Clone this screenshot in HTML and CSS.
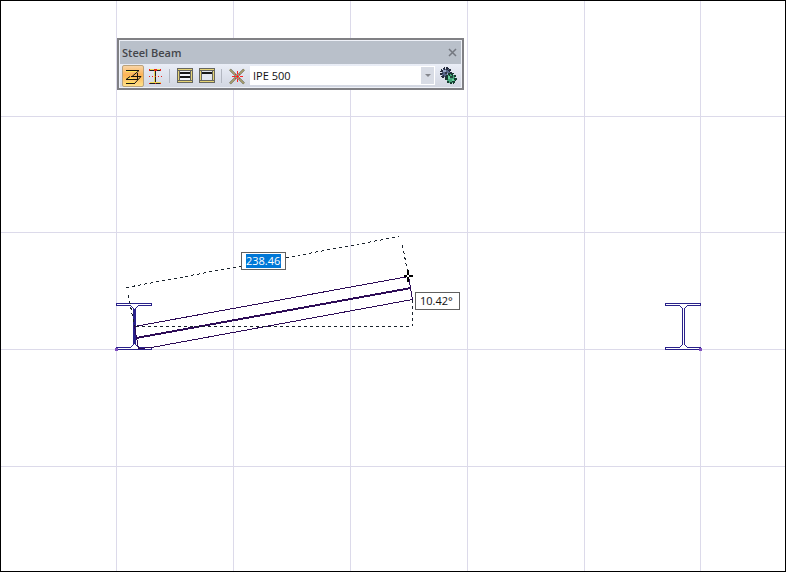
FILE: index.html
```
<!DOCTYPE html>
<html lang="en">
<head>
<meta charset="utf-8">
<title>Steel Beam</title>
<link rel="stylesheet" href="styles.css">
</head>
<body>
<main class="canvas">
  <svg class="drawing" aria-hidden="true" shape-rendering="crispEdges">
    <defs>
      <g id="section" fill="none" stroke="#29218a">
        <path d="M14.500 2.500H.5V.5H35.500V2.500H22.500L19.500 5.500V41.500L22.500 44.500H35.500V46.500H.5V44.500H14.500L17.500 41.500V5.500L14.500 2.500"/>
      </g>
    </defs>
    <g class="grid">
      <line x1="116.500" x2="116.500" y1="0" y2="100%"/>
      <line x1="233.500" x2="233.500" y1="0" y2="100%"/>
      <line x1="350.500" x2="350.500" y1="0" y2="100%"/>
      <line x1="467.500" x2="467.500" y1="0" y2="100%"/>
      <line x1="584.500" x2="584.500" y1="0" y2="100%"/>
      <line x1="700.500" x2="700.500" y1="0" y2="100%"/>
      <line x1="0" x2="100%" y1="116.500" y2="116.500"/>
      <line x1="0" x2="100%" y1="232.500" y2="232.500"/>
      <line x1="0" x2="100%" y1="349.500" y2="349.500"/>
      <line x1="0" x2="100%" y1="466.500" y2="466.500"/>
    </g>
    <use href="#section" x="116" y="303"/>
    <use href="#section" x="665" y="303"/>
    <path class="web" d="M134.500 309V344"/>
    <path class="node" d="M115 348h3v3h-3zM699 348h3v3h-3z"/>
    <path class="beam" d="M134.500 326.500L408.500 276.500L412.500 299.500L151.500 347.500L138.500 348.500L134.500 326.500"/>
    <path class="beam axis" d="M136 338L411 288"/>
    <path class="guide" d="M126.500 287.500L399.500 236.500M128.500 295.500L134.500 326.500M402.500 245.500L408.500 276.500M136 326.500H412M412.500 300V326"/>
    <path class="cursor" d="M407 270h2v5h4v2h-4v5h-2v-5h-3v-2h3z"/>
    <path fill="#fff" d="M407 275h2v2h-2z"/>
  </svg>

  <section class="panel" aria-label="Steel Beam">
    <header class="title">
      <h1>Steel Beam</h1>
      <button class="close" aria-label="Close">
        <svg width="9" height="9"><path d="M1 1L8 8M8 1L1 8" stroke="#747880" stroke-width="1.500"/></svg>
      </button>
    </header>
    <div class="tools">
      <button class="tool active" aria-label="Beam by two points">
        <svg width="18" height="18" fill="none" stroke="#17150e">
          <path d="M2 4.500H13M3 11.500H9M2 15.500H10" stroke="#ffe354"/>
          <path shape-rendering="crispEdges" d="M2 3.500H15M7 9.500H17M2 12.500H13M2 16.500H11M13.500 6V13"/>
          <path d="M15 3.500L8 9.500M17 9.500L10.500 16.500M6 9.500L2 12.500"/>
        </svg>
      </button>
      <button class="tool" aria-label="Section insertion point">
        <svg width="18" height="18" shape-rendering="crispEdges">
          <path fill="#ecd75a" d="M4 2h11v1H4zM8 3h1v12H8zM4 15h11v1H4z"/>
          <path fill="#222" d="M4 3h11v1H4zM9 4h1v11H9zM4 16h11v1H4z"/>
          <path fill="#e62219" d="M3 2h1v2H3zM8 2h3v2H8zM14 2h1v2h-1zM3 9h1v1H3zM6 9h1v1H6zM9 9h1v1H9zM12 9h1v1h-1zM15 9h1v1h-1zM3 16h1v1H3zM9 16h1v1H9zM14 16h1v1h-1z"/>
        </svg>
      </button>
      <span class="separator"></span>
      <button class="tool" aria-label="Top and bottom elevation">
        <svg width="18" height="18" shape-rendering="crispEdges">
          <path fill="#66665f" d="M1 1h16v15H1z"/><path fill="#e6d476" d="M2 2h14v1H2zM2 14h14v1H2zM2 4h1v9H2zM15 4h1v9h-1z"/>
          <path fill="#f2f4f8" d="M4 4h10v9H4z"/><path fill="#171717" d="M4 5h10v2H4zM4 9h10v2H4z"/>
        </svg>
      </button>
      <button class="tool" aria-label="Top elevation">
        <svg width="18" height="18" shape-rendering="crispEdges">
          <path fill="#66665f" d="M1 1h16v15H1z"/><path fill="#e6d476" d="M2 2h14v1H2zM2 14h14v1H2zM2 4h1v9H2zM15 4h1v9h-1z"/>
          <path fill="#e2e6ef" d="M4 4h10v9H4z"/><path fill="#171717" d="M4 5h10v2H4z"/>
        </svg>
      </button>
      <span class="separator"></span>
      <button class="tool" aria-label="Delete">
        <svg width="18" height="18">
          <path d="M2 2.500L16 16.500M16 2.500L2 16.500" stroke="#62624f" stroke-width="2.400"/>
          <path d="M2 2.500L16 16.500M16 2.500L2 16.500" stroke="#e7d584" stroke-width="1"/>
          <path shape-rendering="crispEdges" fill="#f22" d="M9 4h1v3H9zM9 12h1v3H9zM4 9h3v1H4zM12 9h3v1h-3zM9 8h1v3H9zM8 9h3v1H8zM7 7h1v1H7zM11 7h1v1h-1zM7 11h1v1H7zM11 11h1v1h-1z"/>
        </svg>
      </button>
      <span class="combo">
        <select aria-label="Section"><option>IPE 500</option></select>
        <span class="arrow"><svg width="6" height="3"><path d="M0 0H6L3 3z" fill="#85878d"/></svg></span>
      </span>
      <button class="tool" aria-label="Settings">
        <svg width="18" height="18" shape-rendering="crispEdges">
          <circle cx="7" cy="6" r="4.500" fill="#566487" stroke="#252b3d" stroke-width="2.500" stroke-dasharray="2 1"/>
          <path d="M4 3h3v2H4zM8 6h2v2H8z" fill="#9aa8c8"/><path d="M6 5h2v2H6z" fill="#303648"/>
          <circle cx="12" cy="11.500" r="4.500" fill="#46a77b" stroke="#173c30" stroke-width="2.500" stroke-dasharray="2 1"/>
          <path d="M9 9h2v3H9zM13 12h2v2h-2z" fill="#6cd1a1"/><path d="M11 9h3v2h-3z" fill="#24483d"/>
        </svg>
      </button>
    </div>
  </section>

  <label class="readout length"><input class="selected" aria-label="Length" value="238.46"></label>
  <label class="readout angle"><input aria-label="Angle" value="10.42°"></label>
</main>
</body>
</html>
```
FILE: styles.css
```
* { box-sizing: border-box; }
body { margin: 0; font: 11px/16px "Open Sans", "Noto Sans", sans-serif; color: #111; }
button, input, select { margin: 0; padding: 0; border: 0; font: inherit; color: inherit; background: none; }
svg { display: block; }

.canvas { position: relative; min-height: 100vh; background: #fff; overflow: hidden; }
.canvas::after { content: ""; position: absolute; inset: 0; border: 1px solid #000; pointer-events: none; }
.drawing { position: absolute; inset: 0; width: 100%; height: 100%; }
.grid { stroke: #dcdaea; }
.web { stroke: #29218a; }
.node { fill: #8050c0; }
.beam { fill: none; stroke: #2c0b56; }
.axis { stroke-width: 2; }
.guide { fill: none; stroke: #18212b; stroke-dasharray: 3 3; }
.cursor { fill: #000; }

/* Floating tool panel */
.panel { position: absolute; left: 117px; top: 38px; width: 347px; border: 2px solid #808084; background: #eef1f8; padding: 1px; }
.title { display: flex; align-items: center; justify-content: space-between; height: 23px; padding: 0 3px 0 2px; background: #b9c0ca; }
.title h1 { margin: 0; font-size: 11px; font-weight: 600; color: #44464b; }
.close { padding: 1px; }
.tools { display: flex; align-items: center; height: 23px; padding: 0 2px; background: linear-gradient(#eaeef7, #d2d6e1); }
.tool { display: grid; place-items: center; flex: none; width: 22px; height: 22px; }
.active { border: 1px solid #b9a27c; border-radius: 2px; background: linear-gradient(#f8d5a8, #fdb354 45%, #ffe18a); }
.separator { flex: none; width: 1px; height: 14px; margin: 0 4px 0 3px; background: #b3b7c1; }
.combo { display: flex; flex: 1; height: 19px; margin: 0 2px; padding: 1px; background: #fff; position: relative; }
.combo select { flex: 1; appearance: none; padding-left: 2px; }
.arrow { position: absolute; top: 1px; right: 1px; bottom: 1px; width: 13px; display: grid; place-items: center; background: #d8dce5; pointer-events: none; }

/* Dynamic dimension fields over the drawing */
.readout { position: absolute; display: flex; align-items: center; width: 45px; height: 18px; padding-left: 4px; border: 1px solid #606060; background: #fff; }
.readout input { width: 35px; height: 14px; }
.length { left: 241px; top: 252px; }
.angle { left: 415px; top: 292px; }
.readout .selected { color: #fff; background: #0078d7; }
```
